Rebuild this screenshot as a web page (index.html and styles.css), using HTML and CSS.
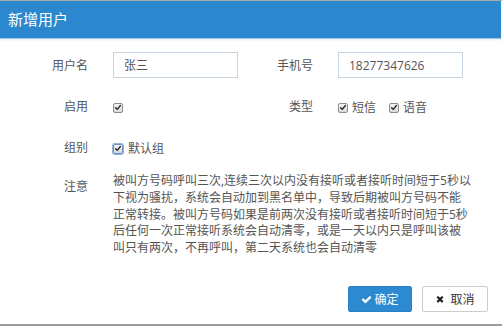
FILE: index.html
```html
<!DOCTYPE html>
<html lang="zh-CN">
<head>
<meta charset="utf-8">
<title>新增用户</title>
<link rel="stylesheet" href="styles.css">
</head>
<body>
<div class="dialog">
  <header class="dlg-head"><h1 class="dlg-title">新增用户</h1></header>
  <form class="dlg-body">
    <div class="row row-input">
      <label class="lbl">用户名</label>
      <div class="ctl"><input class="inp" type="text" value="张三"></div>
      <label class="lbl">手机号</label>
      <div class="ctl"><input class="inp" type="text" value="18277347626"></div>
    </div>
    <div class="row row-check">
      <label class="lbl">启用</label>
      <div class="ctl checks">
        <span class="cb"><svg viewBox="0 0 10 10"><path d="M2 5.2 L4.1 7.3 L8 2.6" /></svg></span>
      </div>
      <label class="lbl">类型</label>
      <div class="ctl checks">
        <span class="chk"><span class="cb"><svg viewBox="0 0 10 10"><path d="M2 5.2 L4.1 7.3 L8 2.6" /></svg></span><span class="chk-text">短信</span></span>
        <span class="chk"><span class="cb"><svg viewBox="0 0 10 10"><path d="M2 5.2 L4.1 7.3 L8 2.6" /></svg></span><span class="chk-text">语音</span></span>
      </div>
    </div>
    <div class="row row-check">
      <label class="lbl">组别</label>
      <div class="ctl checks">
        <span class="chk chk-tight"><span class="cb cb-focus"><svg viewBox="0 0 10 10"><path d="M2 5.2 L4.1 7.3 L8 2.6" /></svg></span><span class="chk-text">默认组</span></span>
      </div>
    </div>
    <div class="row row-note">
      <label class="lbl lbl-note">注意</label>
      <p class="note">被叫方号码呼叫三次,连续三次以内没有接听或者接听时间短于5秒以<br>下视为骚扰，系统会自动加到黑名单中，导致后期被叫方号码不能<br>正常转接。被叫方号码如果是前两次没有接听或者接听时间短于5秒<br>后任何一次正常接听系统会自动清零，或是一天以内只是呼叫该被<br>叫只有两次，不再呼叫，第二天系统也会自动清零</p>
    </div>
  </form>
  <footer class="dlg-foot">
    <button class="btn btn-primary" type="button"><svg class="ico" viewBox="0 0 1792 1792"><path d="M1671 566q0 40-28 68l-724 724-136 136q-28 28-68 28t-68-28l-136-136-362-362q-28-28-28-68t28-68l136-136q28-28 68-28t68 28l294 295 656-657q28-28 68-28t68 28l136 136q28 28 28 68z"/></svg>确定</button>
    <button class="btn btn-default" type="button"><svg class="ico ico-x" viewBox="0 0 1792 1792"><path d="M1490 1322q0 40-28 68l-136 136q-28 28-68 28t-68-28l-294-294-294 294q-28 28-68 28t-68-28l-136-136q-28-28-28-68t28-68l294-294-294-294q-28-28-28-68t28-68l136-136q28-28 68-28t68 28l294 294 294-294q28-28 68-28t68 28l136 136q28 28 28 68t-28 68l-294 294 294 294q28 28 28 68z"/></svg>取消</button>
  </footer>
</div>
</body>
</html>
```

FILE: styles.css
```css
* { box-sizing: border-box; }
html, body { margin: 0; padding: 0; }
body {
  width: 502px;
  height: 326px;
  overflow: hidden;
  background: #ffffff;
  font-family: "Open Sans", "Noto Sans CJK SC", sans-serif;
  font-size: 12px;
  color: #555555;
}
.dialog {
  height: 326px;
  display: flex;
  flex-direction: column;
  border-top: 1px solid #a9a9a9;
  border-bottom: 2px solid #9c9c9c;
  background: #ffffff;
}
.dlg-head {
  height: 38px;
  margin-right: 1px;
  background: #2b88cf;
  border-bottom: 1px solid #9fc6e8;
  box-shadow: 0 1px 2px rgba(0, 0, 0, 0.08);
  display: flex;
  align-items: center;
  padding-left: 8px;
}
.dlg-title {
  margin: 0;
  font-size: 15px;
  font-weight: normal;
  color: #ffffff;
  line-height: 1;
  padding-bottom: 1px;
}
.dlg-body {
  flex: 1;
  margin: 0;
  padding-top: 13px;
}
.row {
  display: grid;
  grid-template-columns: 88px 125px 50px 125px;
  column-gap: 25px;
  align-items: center;
}
.row-input { height: 26px; }
.row-check { height: 26px; margin-top: 15px; }
.row-note { margin-top: 13px; align-items: start; }
.lbl {
  text-align: right;
  color: #555555;
  white-space: nowrap;
  line-height: 17px;
}
.inp {
  width: 125px;
  height: 26px;
  border: 1px solid #c8d6e4;
  border-radius: 0;
  padding: 0 10px;
  font-family: "Open Sans", "Noto Sans CJK SC", sans-serif;
  font-size: 12px;
  color: #555555;
  background: #ffffff;
  outline: none;
}
.checks {
  display: flex;
  align-items: center;
  gap: 13px;
  padding-top: 3px;
  white-space: nowrap;
}
.chk {
  display: inline-flex;
  align-items: center;
  gap: 4px;
}
.chk-tight { gap: 5px; }
.chk-text { color: #555555; line-height: 14px; }
.cb {
  width: 10px;
  height: 10px;
  border: 1px solid #8e8e8e;
  border-radius: 2px;
  background: linear-gradient(#f6f6f6, #d9d9d9);
  display: inline-flex;
  align-items: center;
  justify-content: center;
  flex: none;
}
.cb svg { width: 9px; height: 9px; }
.cb path {
  fill: none;
  stroke: #2b2b2b;
  stroke-width: 1.8;
  stroke-linecap: round;
  stroke-linejoin: round;
}
.cb-focus {
  box-shadow: 0 0 0 1px #8fb2dd;
  border-color: #6b8fc0;
}
.lbl-note { padding-top: 5px; }
.note {
  grid-column: 2 / 5;
  margin: 0;
  width: 350px;
  white-space: nowrap;
  line-height: 16.8px;
  color: #555555;
}
.dlg-foot {
  display: flex;
  justify-content: flex-end;
  gap: 10px;
  padding: 0 14px 12px 0;
}
.btn {
  height: 26px;
  border-radius: 2px;
  font-family: "Open Sans", "Noto Sans CJK SC", sans-serif;
  font-size: 12px;
  display: inline-flex;
  align-items: center;
  justify-content: center;
  gap: 2px;
  padding: 0;
  cursor: pointer;
}
.btn-primary {
  width: 64px;
  background: #2d89d0;
  border: 1px solid #2a80c4;
  color: #ffffff;
}
.btn-primary .ico { fill: #ffffff; }
.btn-default {
  width: 66px;
  background: #ffffff;
  border: 1px solid #cccccc;
  color: #333333;
  gap: 5px;
}
.ico { width: 11px; height: 11px; fill: #222222; }
.ico-x { width: 10px; height: 10px; }
```
